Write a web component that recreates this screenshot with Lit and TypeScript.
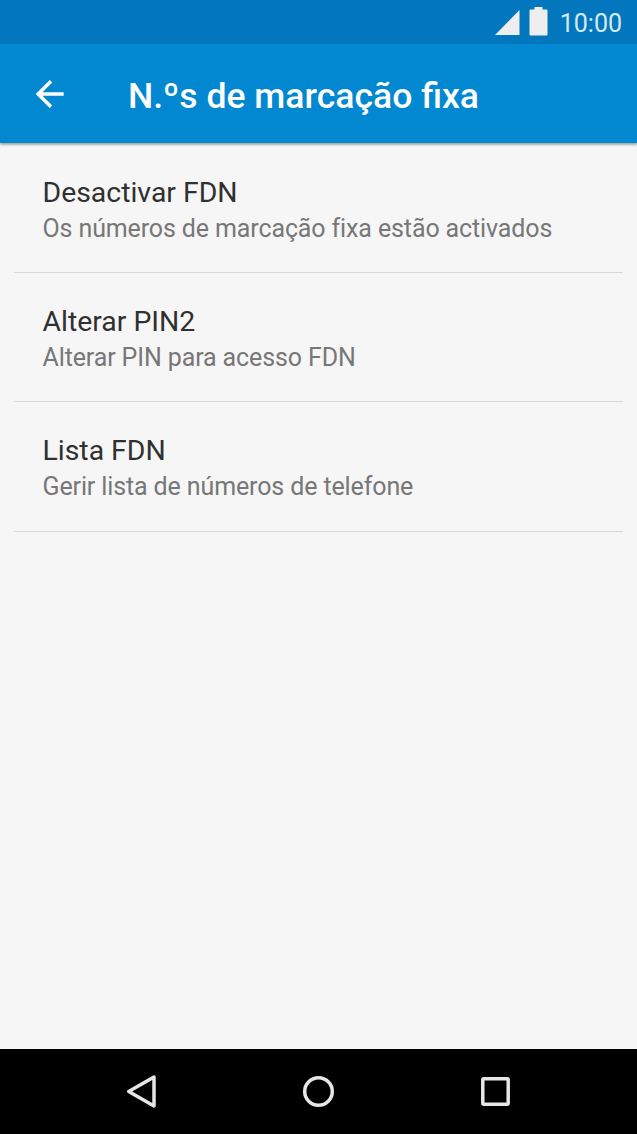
import {html, css, LitElement} from "lit";

interface Preference {
  title: string;
  summary: string;
}

export class AppRoot extends LitElement {
  static get styles() {
    return css`
      :host {
        display: flex;
        flex-direction: column;
        height: 1134px;
        background: #f6f6f6;
        font-family: Roboto, sans-serif;
      }

      .status {
        display: flex;
        justify-content: flex-end;
        height: 44px;
        background: #0277bd;
        color: #eee;
      }

      .signal {
        margin: 10px 9px 0 0;
      }

      .battery {
        margin: 7px 12px 0 0;
      }

      .clock {
        margin-right: 15px;
        color: #d9e9f3;
        font-size: 25px;
        line-height: 47px;
      }

      .toolbar {
        display: flex;
        align-items: center;
        height: 99px;
        box-sizing: border-box;
        padding-left: 35px;
        background: #0288d1;
        color: #fff;
        box-shadow: 0 2px 2px rgba(0, 0, 0, 0.3);
      }

      .title {
        margin: 4px 0 0 63px;
        font-size: 35.55px;
        font-weight: 500;
        line-height: 44px;
        white-space: nowrap;
      }

      .list {
        flex: 1;
        margin: 0;
        padding: 1px 14px 0;
        list-style: none;
      }

      .item {
        height: 129.2px;
        box-sizing: border-box;
        padding: 31px 28.5px 0;
        border-bottom: 1px solid #d9d9d9;
        white-space: nowrap;
      }

      .name {
        color: #303030;
        font-size: 28.4px;
        line-height: 36px;
      }

      .summary {
        color: #777;
        font-size: 25px;
        letter-spacing: -0.12px;
        font-variant-ligatures: common-ligatures;
        line-height: 36px;
      }

      .navigation {
        height: 85px;
        background: #000;
      }

      svg {
        display: block;
        flex: none;
      }
    `;
  }

  static get properties() {
    return {
      header: {
        type: String
      },
      preferences: {
        type: Array
      }
    }
  }

  declare header: string;
  declare preferences: Preference[];

  constructor() {
    super();
    this.header = "N.ºs de marcação fixa";
    this.preferences = [
      {title: "Desactivar FDN", summary: "Os números de marcação fixa estão activados"},
      {title: "Alterar PIN2", summary: "Alterar PIN para acesso FDN"},
      {title: "Lista FDN", summary: "Gerir lista de números de telefone"}
    ];
  }

  _renderStatus() {
    return html`
      <div class="status">
        <svg class="signal" width="25" height="25" viewBox="0 0 25 25"><path d="M24.500 0v25H0z" fill="currentColor"/></svg>
        <svg class="battery" width="19" height="29" viewBox="0 0 19 29"><path d="M5.500 0h8v2.500H17.500q1 0 1 1V27.500q0 1-1 1H1.500q-1 0-1-1V3.500q0-1 1-1H5.500z" fill="currentColor"/></svg>
        <span class="clock">10:00</span>
      </div>
    `;
  }

  _renderPreference({title, summary}: Preference) {
    return html`
      <li class="item">
        <div class="name">${title}</div>
        <div class="summary">${summary}</div>
      </li>
    `;
  }

  _renderNavigation() {
    return html`
      <div class="navigation">
        <svg width="637" height="85" viewBox="0 0 637 85" fill="none" stroke="#e6e6e6" stroke-width="3.500">
          <path d="M154 28v29L128.700 42.500z" stroke-linejoin="round"/>
          <circle cx="318.500" cy="42.500" r="13.800"/>
          <rect x="482.800" y="29.800" width="25.400" height="25.400" rx="1"/>
        </svg>
      </div>
    `;
  }

  render() {
    return html`
      ${this._renderStatus()}
      <div class="toolbar">
        <svg width="30" height="30" viewBox="0 0 30 30" fill="none" stroke="currentColor" stroke-width="3.500">
          <path d="M28.700 15H3M16 2.200L3.200 15l12.800 12.800"/>
        </svg>
        <div class="title">${this.header}</div>
      </div>
      <ul class="list">
        ${this.preferences.map((preference) => this._renderPreference(preference))}
      </ul>
      ${this._renderNavigation()}
    `;
  }
}

customElements.define("app-root", AppRoot);
